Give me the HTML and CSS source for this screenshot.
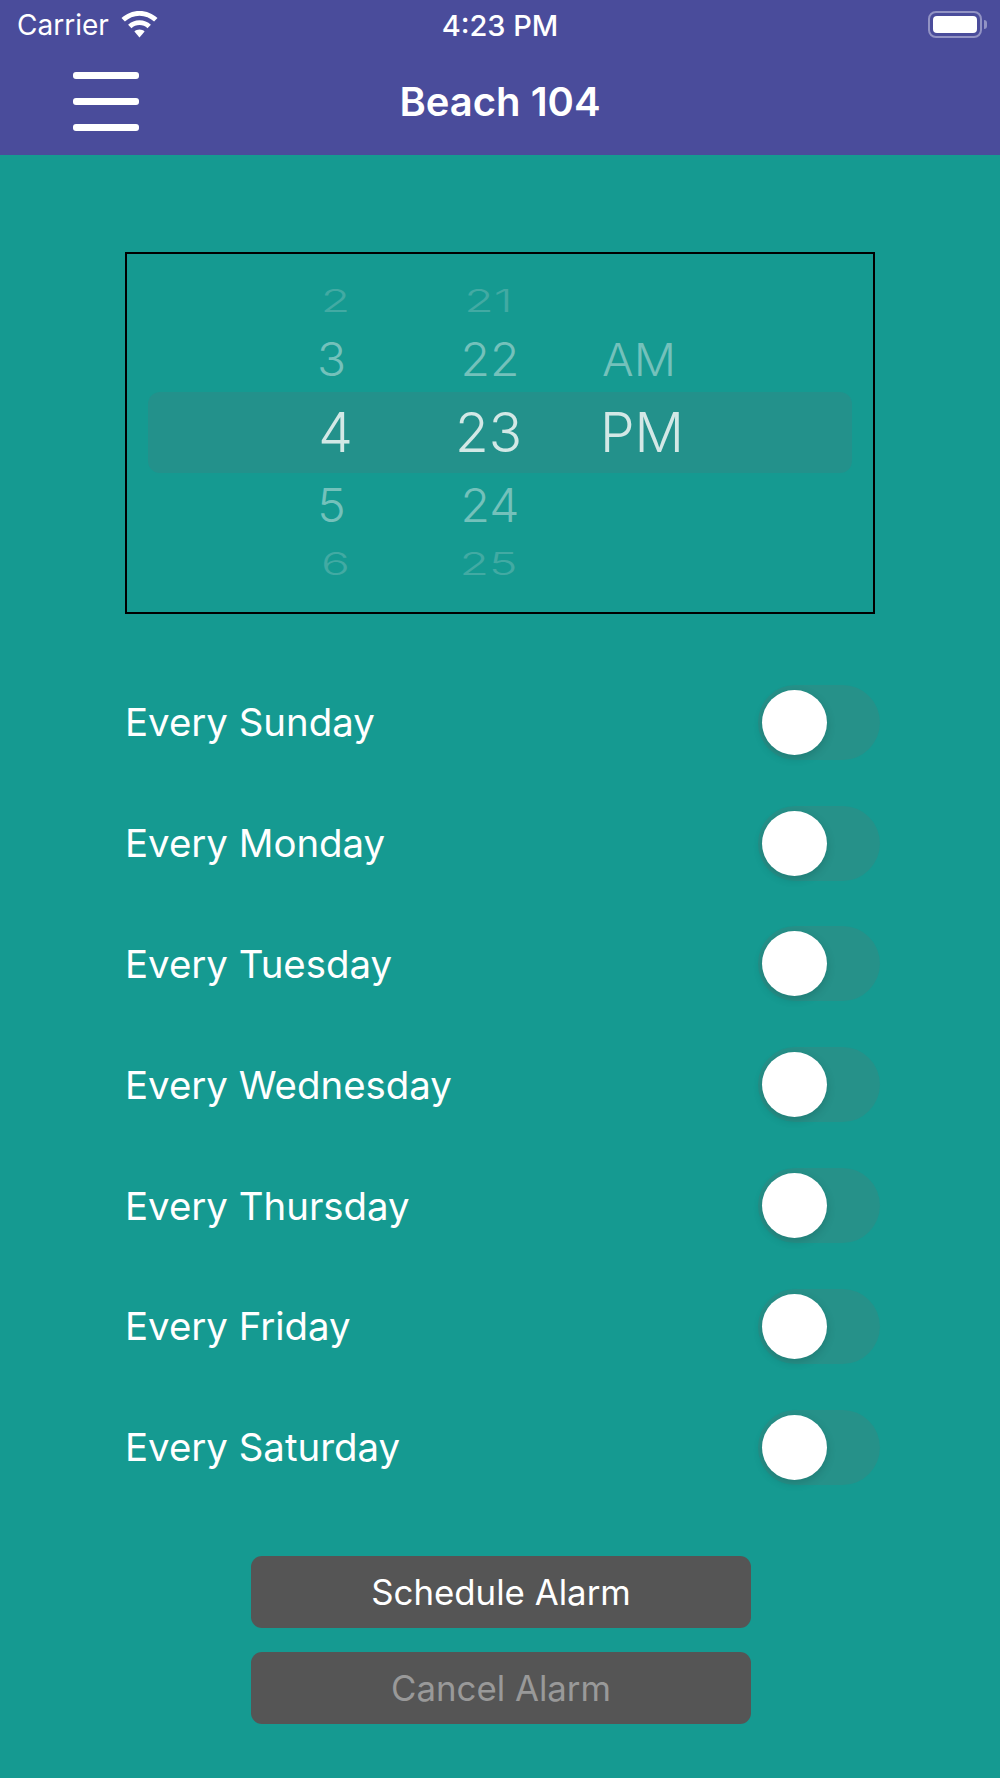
FILE: index.html
```html
<!DOCTYPE html>
<html lang="en">
<head>
  <meta charset="UTF-8" />
  <title>Beach 104</title>
  <link rel="stylesheet" href="styles.css">
</head>
<body>
  <header class="topbar">
    <div class="status">
      <div class="status-left">
        <span class="carrier">Carrier</span>
        <svg class="wifi" viewBox="0 0 37 27" width="37" height="27">
          <path d="M18.5 0C11.5 0 5.2 2.7.5 7.1l3.4 3.5C7.7 7 12.9 4.8 18.5 4.8s10.8 2.2 14.6 5.8l3.4-3.5C31.8 2.7 25.500 0 18.5 0z" fill="#fff"/>
          <path d="M18.5 9.2c-4.4 0-8.4 1.7-11.4 4.5l3.4 3.5c2.1-1.9 4.9-3.1 8-3.1s5.900 1.200 8 3.100l3.400-3.500c-3-2.800-7-4.500-11.400-4.500z" fill="#fff"/>
          <path d="M18.5 18.500c-2 0-3.700.7-5.100 1.900l5.100 6.100 5.100-6.100c-1.400-1.200-3.100-1.900-5.100-1.900z" fill="#fff"/>
        </svg>
      </div>
      <span class="clock">4:23 PM</span>
      <div class="battery">
        <div class="battery-shell"><div class="battery-fill"></div></div>
        <div class="battery-nub"></div>
      </div>
    </div>
    <nav class="navbar">
      <div class="burger"><i></i><i></i><i></i></div>
      <h1 class="title">Beach 104</h1>
    </nav>
  </header>

  <main class="content">
    <section class="picker">
      <div class="picker-band"></div>
      <div class="wheel hours">
        <span class="far"><b>2</b></span>
        <span class="near"><b>3</b></span>
        <span class="current"><b>4</b></span>
        <span class="near"><b>5</b></span>
        <span class="far"><b>6</b></span>
      </div>
      <div class="wheel minutes">
        <span class="far"><b>21</b></span>
        <span class="near"><b>22</b></span>
        <span class="current"><b>23</b></span>
        <span class="near"><b>24</b></span>
        <span class="far"><b>25</b></span>
      </div>
      <div class="wheel ampm">
        <span></span>
        <span class="near"><b>AM</b></span>
        <span class="current"><b>PM</b></span>
      </div>
    </section>

    <ul class="days">
      <li class="day"><span>Every Sunday</span><div class="switch"><div class="knob"></div></div></li>
      <li class="day"><span>Every Monday</span><div class="switch"><div class="knob"></div></div></li>
      <li class="day"><span>Every Tuesday</span><div class="switch"><div class="knob"></div></div></li>
      <li class="day"><span>Every Wednesday</span><div class="switch"><div class="knob"></div></div></li>
      <li class="day"><span>Every Thursday</span><div class="switch"><div class="knob"></div></div></li>
      <li class="day"><span>Every Friday</span><div class="switch"><div class="knob"></div></div></li>
      <li class="day"><span>Every Saturday</span><div class="switch"><div class="knob"></div></div></li>
    </ul>

    <div class="actions">
      <button class="btn">Schedule Alarm</button>
      <button class="btn btn-off">Cancel Alarm</button>
    </div>
  </main>
</body>
</html>
```

FILE: styles.css
```css
* {
  box-sizing: border-box;
}
body {
  margin: 0;
  width: 1000px;
  height: 1778px;
  overflow: hidden;
  font-family: Inter, "Liberation Sans", sans-serif;
  color: #fff;
  background-color: #159a91;
}

/* top bar */
.topbar {
  height: 155px;
  background-color: #4a4c9b;
}
.status {
  height: 50px;
  display: grid;
  grid-template-columns: 1fr auto 1fr;
  align-items: center;
  padding: 0 13px 0 17px;
}
.status-left {
  display: flex;
  align-items: center;
  gap: 12px;
}
.carrier {
  font-size: 28px;
}
.wifi {
  margin-top: -2px;
}
.clock {
  font-size: 29px;
  font-weight: 500;
  margin-right: 4px;
}
.battery {
  justify-self: end;
  display: flex;
  align-items: center;
  gap: 2px;
  margin-top: -2px;
}
.battery-shell {
  width: 54px;
  height: 27px;
  padding: 3px;
  border: 2px solid #9293c4;
  border-radius: 8px;
}
.battery-fill {
  height: 100%;
  background-color: #fff;
  border-radius: 4px;
}
.battery-nub {
  width: 3px;
  height: 9px;
  background-color: #9293c4;
  border-radius: 0 3px 3px 0;
}
.navbar {
  height: 105px;
  display: grid;
  grid-template-columns: 1fr auto 1fr;
  align-items: center;
  padding: 0 73px;
}
.burger {
  width: 66px;
  display: flex;
  flex-direction: column;
  gap: 19px;
  margin-top: -2px;
}
.burger i {
  display: block;
  height: 7px;
  background-color: #fff;
  border-radius: 3px;
}
.title {
  margin: -2px 0 0;
  font-size: 40px;
  font-weight: 600;
}

/* time picker */
.content {
  padding: 97px 120px 0 125px;
}
.picker {
  position: relative;
  width: 750px;
  height: 362px;
  border: 2px solid #000;
  padding: 17px 0 0 132px;
  display: grid;
  grid-template-columns: 153px 153px 153px;
  align-content: start;
}
.picker-band {
  position: absolute;
  left: 21px;
  right: 21px;
  top: 138px;
  height: 81px;
  background-color: #23918b;
  border-radius: 12px;
}
.wheel {
  position: relative;
  display: grid;
  grid-template-rows: 58px 60px 86px 60px 56px;
  text-align: center;
  align-items: center;
}
.wheel span {
  display: block;
}
.wheel b {
  display: inline-block;
  font-weight: 350;
}
.current {
  font-size: 55px;
  color: #d3e8e6;
}
.near {
  font-size: 48px;
  color: #74c1bb;
}
.near b {
  transform: scaleY(0.97);
}
.far {
  font-size: 48px;
  color: #42aaa3;
}
.far b {
  transform: scaleY(0.64);
}
.hours .near {
  padding-right: 8px;
}
.minutes .near {
  padding-left: 3px;
}
.ampm {
  text-align: left;
  padding-left: 35px;
}
.ampm .near {
  padding-left: 2px;
  font-size: 47px;
}

/* weekday rows */
.days {
  list-style: none;
  margin: 48px 0 0;
  padding: 0;
}
.day {
  height: 120.8px;
  display: flex;
  align-items: center;
  justify-content: space-between;
  font-size: 38.4px;
}
.switch {
  width: 122px;
  height: 75px;
  padding: 5px 4px;
  background-color: #269189;
  border-radius: 38px;
}
.knob {
  width: 65px;
  height: 65px;
  background-color: #fff;
  border-radius: 50%;
  box-shadow: 0 3px 10px rgba(0, 0, 0, 0.16);
}

/* buttons */
.actions {
  width: 500px;
  margin: 48.6px 0 0 126px;
  display: flex;
  flex-direction: column;
  gap: 24px;
}
.btn {
  height: 72px;
  border: none;
  border-radius: 11px;
  background-color: #555;
  color: #fff;
  font-family: inherit;
  font-size: 34.8px;
}
.btn-off {
  color: #999;
}
```
